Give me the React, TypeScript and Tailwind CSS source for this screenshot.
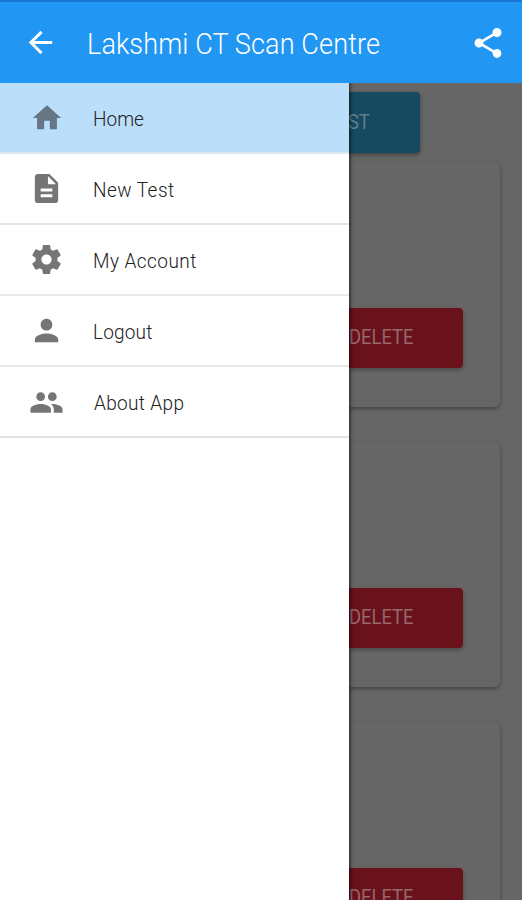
import { MdArrowBack, MdDescription, MdHome, MdPeople, MdPerson, MdShare } from 'react-icons/md'

function GearIcon({ size }: { size: number }) {
    return (
        <svg width={size} height={size} viewBox="0 0 24 24" fill="currentColor">
            <path d="M19.43 12.98c.04-.32.07-.64.07-.98s-.03-.66-.07-.98l2.11-1.65c.19-.15.24-.42.12-.64l-2-3.46c-.12-.22-.39-.3-.61-.22l-2.49 1c-.52-.4-1.08-.73-1.69-.98l-.38-2.65C14.46 2.18 14.25 2 14 2h-4c-.25 0-.46.18-.49.42l-.38 2.65c-.61.25-1.17.59-1.69.98l-2.49-1c-.23-.09-.49 0-.61.22l-2 3.46c-.13.22-.07.49.12.64l2.11 1.65c-.04.32-.07.65-.07.98s.03.66.07.98l-2.11 1.65c-.19.15-.24.42-.12.64l2 3.46c.12.22.39.3.61.22l2.49-1c.52.4 1.08.73 1.69.98l.38 2.65c.03.24.24.42.49.42h4c.25 0 .46-.18.49-.42l.38-2.65c.61-.25 1.17-.59 1.69-.98l2.49 1c.23.09.49 0 .61-.22l2-3.46c.12-.22.07-.49-.12-.64l-2.11-1.65zM12 15.5c-1.93 0-3.5-1.57-3.5-3.5s1.57-3.5 3.5-3.5 3.5 1.57 3.5 3.5-1.57 3.5-3.5 3.5z" />
        </svg>
    )
}

const menuItems = [
    { label: 'Home', icon: MdHome, size: 34, className: 'border-b-[#dfe8ef] bg-[#bbdefa] text-[#667684]', text: 'pt-[5px] tracking-[0.05px]' },
    { label: 'New Test', icon: MdDescription, size: 35, className: 'border-b-[#e4e4e4] bg-white text-[#757575]', text: 'pt-[5px] tracking-[0.5px]' },
    { label: 'My Account', icon: GearIcon, size: 35, className: 'border-b-[#e8e8e8] bg-white text-[#757575]', text: 'pt-[5px] tracking-[0.5px]' },
    { label: 'Logout', icon: MdPerson, size: 35, className: 'border-b-[#e8e8e8] bg-white text-[#757575]', text: 'pt-[5px] tracking-[0.2px]' },
    { label: 'About App', icon: MdPeople, size: 35, className: 'border-b-[#e4e4e4] bg-white pt-0.5 text-[#757575]', text: 'pt-[3px] pl-px tracking-[0.4px]' },
]

function Header() {
    return (
        <header className="z-20 flex h-[83px] shrink-0 items-center border-t-2 border-[#1976d2] bg-[#2196f3] pr-4 pl-[23px] text-white">
            <MdArrowBack size={35} />
            <h1 className="ml-[29px] flex-1 origin-left scale-x-[0.934] pt-[5px] text-[29px] font-light tracking-[0.1px] whitespace-nowrap">
                Lakshmi CT Scan Centre
            </h1>
            <MdShare size={36} />
        </header>
    )
}

function Drawer() {
    return (
        <nav className="z-10 w-[349px] shrink-0 bg-white shadow-[1px_0_4px_rgba(0,0,0,0.7)]">
            {menuItems.map(({ label, icon: Icon, size, className, text }) => (
                <a key={label} href="#" className={`flex h-[71px] items-center border-b-2 ${className}`}>
                    <span className="ml-[29px] flex w-[35px] justify-center">
                        <Icon size={size} />
                    </span>
                    <span className={`ml-[29px] origin-left scale-x-[0.905] text-[21px] font-light text-[#222] ${text}`}>{label}</span>
                </a>
            ))}
        </nav>
    )
}

function TestCard() {
    return (
        <div className="mb-[35px] h-[245px] w-[151px] shrink-0 rounded-r-md bg-[#666] pt-[146px] shadow-[0_2px_4px_rgba(0,0,0,0.35)]">
            <button className="flex h-[60px] w-[114px] items-center rounded-r-sm bg-[#69121b] pb-0.5 text-[20px] text-[#97686c] shadow-[0_2px_4px_rgba(0,0,0,0.3)]">
                <span className="origin-left scale-x-[0.92]">DELETE</span>
            </button>
        </div>
    )
}

function App() {
    return (
        <div className="flex h-[900px] w-[522px] flex-col overflow-hidden bg-white font-['Roboto',sans-serif]">
            <Header />
            <div className="flex min-h-0 flex-1">
                <Drawer />
                <main className="flex flex-1 flex-col overflow-hidden bg-[#666] pt-[9px]">
                    <button className="mb-[9px] flex h-[61px] w-[71px] shrink-0 items-center rounded-r-sm bg-[#154a60] pb-0.5 text-[20px] text-[#667f8c] shadow-[0_2px_4px_rgba(0,0,0,0.35)]">
                        <span className="-ml-[3px] origin-right scale-x-[0.92]">ST</span>
                    </button>
                    <TestCard />
                    <TestCard />
                    <TestCard />
                </main>
            </div>
        </div>
    )
}

export default App
